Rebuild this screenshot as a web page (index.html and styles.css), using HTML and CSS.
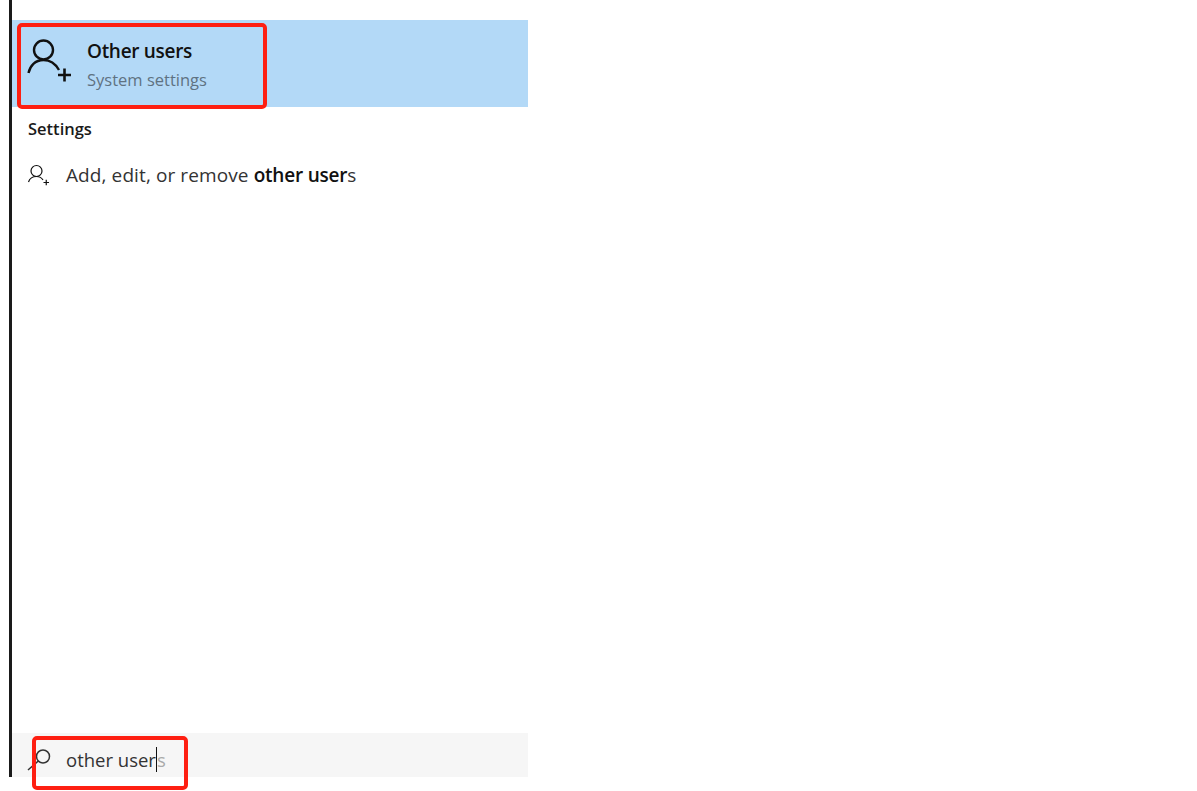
FILE: index.html
```html
<!DOCTYPE html>
<html>
<head>
    <title>Search</title>
    <link rel="stylesheet" href="styles.css">
</head>
<body>
    <div class="panel">
        <div class="best-match">
            <svg class="icon-large" viewBox="0 0 46 46">
                <circle cx="16.500" cy="12" r="9.500"/>
                <path d="M1.500 35 C3 28 8 22 16.500 22 C23 22 28 25 32 32"/>
                <path class="plus" d="M31 37 H44 M37.500 30.500 V43.500"/>
            </svg>
            <div class="best-text">
                <div class="best-title">Other users</div>
                <div class="best-sub">System settings</div>
            </div>
            <div class="callout callout-top"></div>
        </div>
        <div class="section-label">Settings</div>
        <div class="result-row">
            <svg class="icon-small" viewBox="0 0 24 24">
                <circle cx="9.500" cy="8" r="5.500"/>
                <path d="M1.500 19 C2.500 16 5 13.500 9.500 13.500 C12 13.500 14.500 14.500 16 17"/>
                <path d="M16.500 19.500 H22 M19.250 16.750 V22.250"/>
            </svg>
            <span class="result-text">Add, edit, or remove <b>other user</b>s</span>
        </div>
        <div class="spacer"></div>
        <div class="search-bar">
            <svg class="icon-search" viewBox="0 0 30 30">
                <circle cx="19" cy="12.500" r="6.500"/>
                <path d="M14.300 17 L4 26"/>
            </svg>
            <span class="search-text">other user<span class="caret"></span><span class="search-hint">s</span></span>
            <div class="callout callout-bottom"></div>
        </div>
    </div>
</body>
</html>
```

FILE: styles.css
```css
html, body {
    min-height: 100vh;
}
body {
    margin: 0;
    padding-left: 9px;
    background-color: #fff;
    font-family: "Open Sans", "Noto Sans", sans-serif;
    color: #1a1a1a;
}
.panel {
    width: 516px;
    height: 777px;
    border-left: 3px solid #1a1a1a;
    display: flex;
    flex-direction: column;
}
svg {
    fill: none;
    stroke: #111;
    flex: none;
}
.best-match {
    position: relative;
    margin-top: 20px;
    height: 87px;
    background-color: #b3d9f7;
    display: flex;
    align-items: center;
}
.icon-large {
    width: 46px;
    height: 46px;
    margin-left: 15px;
    align-self: flex-start;
    margin-top: 18px;
    stroke-width: 2.400;
}
.icon-large .plus {
    stroke-width: 2.600;
}
.best-text {
    margin-left: 14px;
    margin-top: 3px;
}
.best-title {
    font-size: 19px;
    font-weight: 600;
    letter-spacing: -0.3px;
    line-height: 24px;
    color: #111;
}
.best-sub {
    font-size: 16.500px;
    line-height: 22px;
    margin-top: 6px;
    color: #5f7282;
}
.section-label {
    margin: 11px 0 0 16px;
    font-size: 16.500px;
    font-weight: 600;
    line-height: 22px;
}
.result-row {
    display: flex;
    align-items: center;
    margin-top: 22px;
    height: 26px;
}
.icon-small {
    width: 24px;
    height: 24px;
    margin-left: 15px;
    stroke-width: 1.200;
}
.result-text {
    margin-left: 15px;
    font-size: 19px;
    letter-spacing: 0.1px;
    color: #333;
}
.result-text b {
    font-weight: 600;
    letter-spacing: -0.2px;
    color: #111;
}
.spacer {
    flex: 1;
}
.search-bar {
    position: relative;
    height: 44px;
    background-color: #f6f6f6;
    display: flex;
    align-items: center;
}
.icon-search {
    width: 30px;
    height: 30px;
    margin-left: 12px;
    margin-top: 8px;
    stroke: #333;
    stroke-width: 1.500;
}
.search-text {
    margin-left: 12px;
    margin-top: 9px;
    font-size: 18.500px;
    color: #333;
    display: flex;
    align-items: center;
}
.search-hint {
    color: #aaa;
}
.caret {
    width: 1px;
    height: 25px;
    background-color: #111;
}
/* red annotation boxes drawn over the screenshot */
.callout {
    position: absolute;
    box-sizing: border-box;
    border: 4px solid #fe1f12;
    border-radius: 5px;
}
.callout-top {
    left: 5px;
    top: 3px;
    width: 250px;
    height: 86px;
}
.callout-bottom {
    left: 20px;
    top: 3px;
    width: 156px;
    height: 54px;
}
```
